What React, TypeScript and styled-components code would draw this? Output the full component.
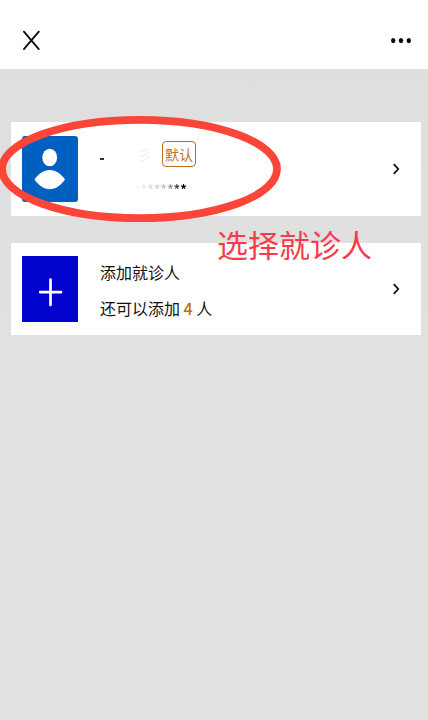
import React from "react";
import styled, { createGlobalStyle } from "styled-components";

const GlobalStyle = createGlobalStyle`
  *, *::before, *::after { box-sizing: border-box; }
  body {
    margin: 0;
    background: #e0e0e0;
    color: #111;
    font-family: "Noto Sans CJK SC", sans-serif;
  }
`;

const Page = styled.div`
  min-height: 100vh;
  background: linear-gradient(#dedede, #e1e1e1 360px);
`;

const Header = styled.header`
  display: flex;
  align-items: center;
  justify-content: space-between;
  height: 69px;
  padding: 12px 16px 0 20px;
  background: #fff;
`;

const IconButton = styled.button`
  display: flex;
  padding: 0;
  border: 0;
  background: none;
  color: #0a0a0a;
  cursor: pointer;
`;

const CardList = styled.main`
  position: relative;
  display: flex;
  flex-direction: column;
  gap: 27px;
  padding: 53px 7px 24px 11px;
`;

const Card = styled.button<{ $pad: number }>`
  display: flex;
  align-items: center;
  gap: 22px;
  width: 100%;
  padding: ${(p) => p.$pad}px 20px ${(p) => p.$pad}px 11px;
  border: 0;
  background: #fff;
  color: inherit;
  font: inherit;
  text-align: left;
  cursor: pointer;
`;

const Tile = styled.span<{ $color: string; $radius?: number }>`
  display: flex;
  flex: none;
  width: 56px;
  height: 66px;
  border-radius: ${(p) => p.$radius ?? 0}px;
  background: ${(p) => p.$color};
`;

const Details = styled.span`
  display: flex;
  flex: 1;
  flex-direction: column;
  gap: 12px;
  padding-top: 2px;
  font-size: 16px;
  line-height: 24px;
`;

const NameRow = styled.span`
  display: flex;
  align-items: center;
  height: 26px;
`;

const Name = styled.span`
  display: flex;
  align-items: center;
  gap: 32px;
  width: 62px;
  color: #f2f2f2;
`;

const NameMark = styled.span`
  width: 4px;
  height: 2px;
  margin-top: 10px;
  background: #333;
`;

const DefaultTag = styled.span`
  padding: 0 2px;
  border: 1px solid #b8711a;
  border-radius: 4px;
  color: #b5761a;
  font-size: 14px;
  line-height: 24px;
`;

const MaskedNumber = styled.span`
  align-self: flex-start;
  padding-left: 34px;
  background: linear-gradient(90deg, #fff 40%, #bbb 78%, #000 94%);
  background-clip: text;
  color: transparent;
  font-size: 13px;
  font-weight: 700;
  line-height: 20px;
`;

const Remaining = styled.span`
  color: #bd700c;
  font-weight: 500;
`;

const Ring = styled.svg`
  position: absolute;
  top: 46px;
  left: -2px;
  pointer-events: none;
`;

const Hint = styled.span`
  position: absolute;
  top: 152px;
  left: 217px;
  color: #f63c4b;
  font-size: 31px;
  line-height: 46px;
  white-space: nowrap;
  pointer-events: none;
`;

function Chevron() {
  return (
    <svg width="10" height="14" viewBox="0 0 10 14" fill="none" aria-hidden="true">
      <path d="M2.8 2.2 7.2 7 2.8 11.8" stroke="#111" strokeWidth="1.8" />
    </svg>
  );
}

export default function App() {
  return (
    <Page>
      <GlobalStyle />
      <Header>
        <IconButton type="button" aria-label="关闭">
          <svg width="22" height="24" viewBox="0 0 22 24" fill="none">
            <path d="M3.9 2.7 18.8 20.1M18.8 2.7 3.9 20.1" stroke="currentColor" strokeWidth="1.8" strokeLinecap="round" />
          </svg>
        </IconButton>
        <IconButton type="button" aria-label="更多">
          <svg width="22" height="12" viewBox="0 0 22 12" fill="currentColor">
            <ellipse cx="3.2" cy="5.6" rx="2.2" ry="2.6" />
            <ellipse cx="11" cy="5.6" rx="2.2" ry="2.6" />
            <ellipse cx="18.8" cy="5.6" rx="2.2" ry="2.6" />
          </svg>
        </IconButton>
      </Header>
      <CardList>
        <Card type="button" $pad={14}>
          <Tile $color="#0060c0" $radius={3}>
            <svg width="56" height="66" viewBox="0 0 56 66" fill="#fff" aria-hidden="true">
              <ellipse cx="27.7" cy="21.5" rx="7.4" ry="8.8" />
              <path d="M12.5 43.5C17 37.5 21.5 34 27.7 34S38.5 37.5 43 43.5C38.5 49.5 34 53.2 27.7 53.2S17 49.5 12.5 43.5Z" />
            </svg>
          </Tile>
          <Details>
            <NameRow>
              <Name>
                <NameMark />
                <span>彡</span>
              </Name>
              <DefaultTag>默认</DefaultTag>
            </NameRow>
            <MaskedNumber>********</MaskedNumber>
          </Details>
          <Chevron />
        </Card>
        <Card type="button" $pad={13}>
          <Tile $color="#0303cf">
            <svg width="56" height="66" viewBox="0 0 56 66" fill="none" aria-hidden="true">
              <path d="M28.5 23.5V49M18.2 36.2H39" stroke="#fff" strokeWidth="2.7" strokeLinecap="round" />
            </svg>
          </Tile>
          <Details>
            <span>添加就诊人</span>
            <span>
              还可以添加 <Remaining>4</Remaining> 人
            </span>
          </Details>
          <Chevron />
        </Card>
        <Ring width="284" height="110" viewBox="0 0 284 110" fill="none" aria-hidden="true">
          <ellipse cx="141.5" cy="54" rx="137.5" ry="49.2" stroke="#fb4539" strokeWidth="7.8" />
        </Ring>
        <Hint>选择就诊人</Hint>
      </CardList>
    </Page>
  );
}
